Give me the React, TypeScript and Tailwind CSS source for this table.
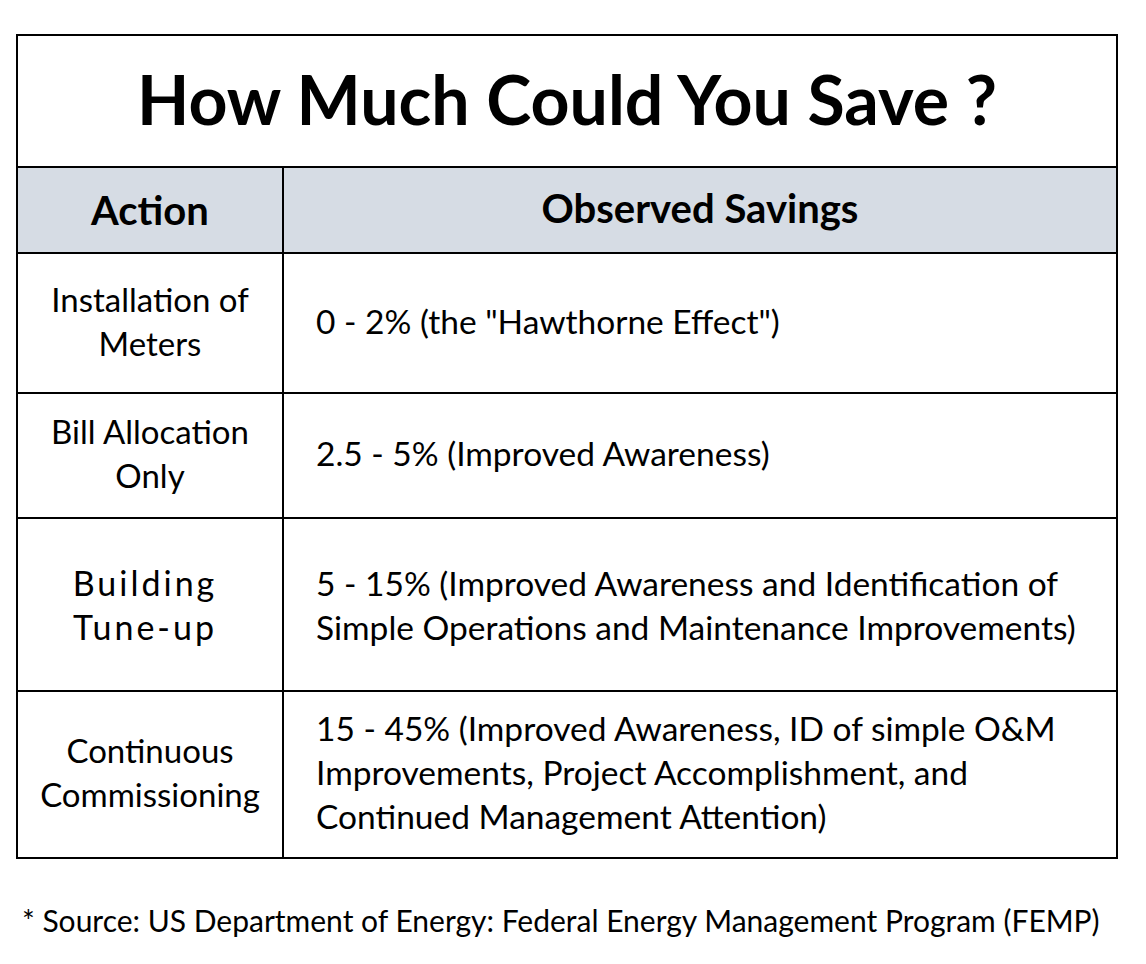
const rows = [
  {
    action: ["Installation of", "Meters"],
    savings: ['0 - 2% (the "Hawthorne Effect")'],
    h: "h-[140px]",
  },
  {
    action: ["Bill Allocation", "Only"],
    savings: ["2.5 - 5% (Improved Awareness)"],
    h: "h-[125px]",
  },
  {
    action: ["Building", "Tune-up"],
    savings: [
      "5 - 15% (Improved Awareness and Identification of",
      "Simple Operations and Maintenance Improvements)",
    ],
    h: "h-[173px]",
    wide: true,
  },
  {
    action: ["Continuous", "Commissioning"],
    savings: [
      "15 - 45% (Improved Awareness, ID of simple O&M",
      "Improvements, Project Accomplishment, and",
      "Continued Management Attention)",
    ],
    h: "h-[165px]",
  },
]

export default function App() {
  return (
    <div className="w-[1146px] h-[964px] bg-white pt-[34px] pl-[16px] text-black font-['Lato','Liberation_Sans',sans-serif]">
      <div className="w-[1102px] border-2 border-black">
        <div className="h-[132px] flex items-center justify-center border-b-2 border-black">
          <h1 className="text-[68px] font-bold leading-none pb-[4px]">How Much Could You Save ?</h1>
        </div>

        {/* header row */}
        <div className="grid grid-cols-[266px_1fr] h-[86px] bg-[#d6dce4] border-b-2 border-black">
          <div className="flex items-center justify-center border-r-2 border-black text-[40px] font-bold">
            Action
          </div>
          <div className="flex items-center justify-center text-[40px] font-bold pb-[4px]">
            Observed Savings
          </div>
        </div>

        {rows.map((row, i) => (
          <div
            key={i}
            className={`grid grid-cols-[266px_1fr] ${row.h} ${i < rows.length - 1 ? "border-b-2 border-black" : ""}`}
          >
            <div
              className={`flex flex-col items-center justify-center border-r-2 border-black text-center leading-[44px] ${
                row.wide ? "text-[34px] tracking-[3px] pr-[10px]" : "text-[33px] pb-[5px]"
              }`}
            >
              {row.action.map((t) => (
                <span key={t}>{t}</span>
              ))}
            </div>
            <div
              className={`flex flex-col justify-center pl-[32px] text-[33.5px] leading-[44px] ${
                row.wide ? "" : "pb-[5px]"
              }`}
            >
              {row.savings.map((t) => (
                <span key={t}>{t}</span>
              ))}
            </div>
          </div>
        ))}
      </div>

      <p className="mt-[46px] ml-[6px] text-[30px] leading-none">
        * Source: US Department of Energy: Federal Energy Management Program (FEMP)
      </p>
    </div>
  )
}
